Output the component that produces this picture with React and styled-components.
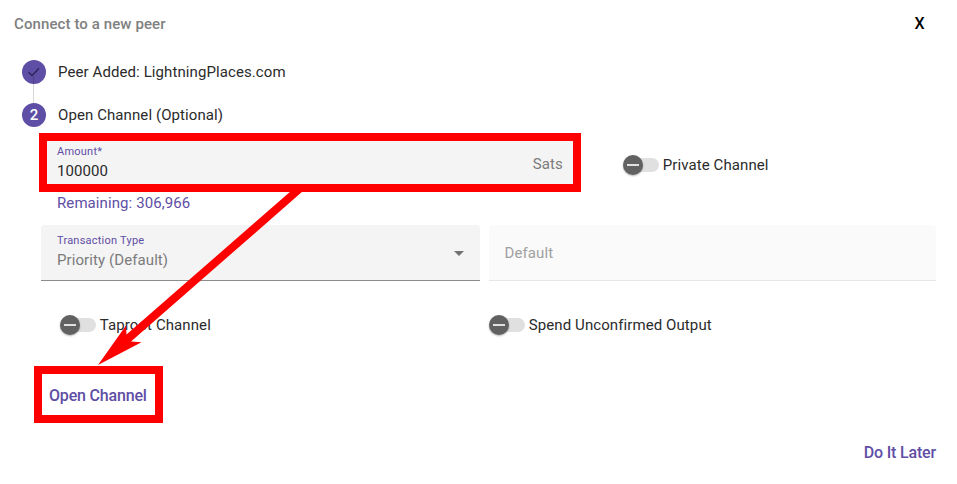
import React from "react";
import styled, { createGlobalStyle } from "styled-components";

const PURPLE = "#5e4ea5";

const GlobalStyle = createGlobalStyle`
  *, *::before, *::after { box-sizing: border-box; }
  body { margin: 0; background: #fff; }
`;

const Dialog = styled.main`
  position: relative;
  width: 957px;
  height: 484px;
  overflow: hidden;
  background: #fff;
  color: #2b2b2b;
  font: 400 15px/20px Roboto, sans-serif;
  letter-spacing: 0.09px;
  white-space: nowrap;
`;

const Header = styled.header`
  display: flex;
  justify-content: space-between;
  align-items: center;
  height: 48px;
  margin-bottom: 12px;
  padding: 0 32.5px 0 14px;
`;

const Title = styled.h1`
  margin: 0;
  font-size: 15px;
  font-weight: 500;
  color: #808080;
  letter-spacing: 0.1px;
`;

const CloseButton = styled.button`
  border: 0;
  padding: 0;
  background: none;
  color: #000;
  font: 500 16px/20px Roboto, sans-serif;
`;

const Step = styled.div`
  display: flex;
  align-items: center;
  gap: 12px;
  height: 24px;
  margin-left: 22px;
`;

const StepBadge = styled.span`
  display: flex;
  align-items: center;
  justify-content: center;
  width: 24px;
  height: 24px;
  border-radius: 50%;
  background: ${PURPLE};
  color: #fff;
  font-weight: 500;
`;

const Connector = styled.div`
  position: relative;
  width: 1px;
  height: 27px;
  margin: -8px 0 0 33px;
  background: rgba(0, 0, 0, 0.16);
`;

const Form = styled.form`
  padding: 9px 21px 0 41px;
`;

const AmountRow = styled.div`
  display: flex;
  height: 57px;
  gap: 45px;
`;

const Field = styled.div`
  display: flex;
  align-items: center;
  justify-content: space-between;
  width: ${(p) => p.$width}px;
  height: 56px;
  padding: 0 16px;
  border-radius: 4px 4px 0 0;
  border-bottom: 1px solid ${(p) => (p.$disabled ? "#e6e6e6" : "#8c8c8c")};
  background: ${(p) => (p.$disabled ? "#fafafa" : "#f4f4f4")};
`;

const FieldText = styled.div`
  display: flex;
  flex-direction: column;
  margin-top: ${(p) => p.$shift}px;
`;

const FieldLabel = styled.label`
  color: ${PURPLE};
  font-size: 11px;
  line-height: 19px;
  letter-spacing: 0.23px;
`;

const FieldValue = styled.span`
  color: ${(p) => p.$color};
`;

const Suffix = styled(FieldValue)`
  margin: 1px -0.8px 0 0;
`;

const Placeholder = styled(FieldValue)`
  margin-left: -0.5px;
`;

const Caret = styled.svg`
  margin-top: 2px;
`;

const Hint = styled.div`
  height: 32px;
  padding: 0 16px;
  color: ${PURPLE};
`;

const SelectRow = styled.div`
  display: flex;
  gap: 9px;
`;

const ToggleRow = styled.div`
  display: grid;
  grid-template-columns: 429px 1fr;
  margin-top: 34px;
  padding-left: 19px;
`;

const Toggle = styled.div`
  display: flex;
  align-items: center;
  height: 20px;
  margin-top: ${(p) => p.$top || 0}px;
`;

const Track = styled.span`
  display: flex;
  align-items: center;
  width: 26px;
  height: 14px;
  margin: 0 3.8px 0 10px;
  border-radius: 7px;
  background: #e0e0e0;
`;

const Thumb = styled.span`
  display: flex;
  flex: none;
  align-items: center;
  justify-content: center;
  width: 20px;
  height: 20px;
  margin-left: -10px;
  border-radius: 50%;
  background: #616161;
  box-shadow: 0 1px 2px rgba(0, 0, 0, 0.3);

  &::after {
    content: "";
    width: 12px;
    height: 2px;
    background: #e0e0e0;
  }
`;

const TextButton = styled.button`
  border: 0;
  padding: 0;
  background: none;
  color: ${PURPLE};
  font: 500 16px/20px Roboto, sans-serif;
  letter-spacing: -0.18px;
`;

const Actions = styled.div`
  display: flex;
  padding: 51px 0 0 8px;
`;

const Footer = styled.footer`
  display: flex;
  justify-content: flex-end;
  padding: 37px 21px 0 0;
`;

const Annotation = styled.svg`
  position: absolute;
  inset: 0;
  pointer-events: none;
`;

function SlideToggle({ label, ...rest }) {
  return (
    <Toggle role="switch" aria-checked="false" {...rest}>
      <Track><Thumb /></Track>
      <span>{label}</span>
    </Toggle>
  );
}

export default function App() {
  return (
    <>
      <GlobalStyle />
      <Dialog>
        <Header>
          <Title>Connect to a new peer</Title>
          <CloseButton>X</CloseButton>
        </Header>
        <Step>
          <StepBadge>
            <svg width="14" height="12" viewBox="0 0 14 12" fill="none" stroke="#2a2352" strokeWidth="1.3">
              <path d="M1.5 6.3 5 9.6 12 2.2" />
            </svg>
          </StepBadge>
          <span>Peer Added: LightningPlaces.com</span>
        </Step>
        <Connector />
        <Step>
          <StepBadge>2</StepBadge>
          <span>Open Channel (Optional)</span>
        </Step>
        <Form>
          <AmountRow>
            <Field $width={537}>
              <FieldText $shift={-5}>
                <FieldLabel>Amount*</FieldLabel>
                <FieldValue $color="#2b2b2b">100000</FieldValue>
              </FieldText>
              <Suffix $color="#7b7b7b">Sats</Suffix>
            </Field>
            <SlideToggle label="Private Channel" $top={19} />
          </AmountRow>
          <Hint>Remaining: 306,966</Hint>
          <SelectRow>
            <Field $width={439}>
              <FieldText $shift={-4}>
                <FieldLabel>Transaction Type</FieldLabel>
                <FieldValue $color="#7b7b7b">Priority (Default)</FieldValue>
              </FieldText>
              <Caret width="10" height="5" viewBox="0 0 10 5">
                <path d="M0 0h10L5 5z" fill="#717171" />
              </Caret>
            </Field>
            <Field $width={447} $disabled>
              <Placeholder $color="#a0a0a0">Default</Placeholder>
            </Field>
          </SelectRow>
          <ToggleRow>
            <SlideToggle label="Taproot Channel" />
            <SlideToggle label="Spend Unconfirmed Output" />
          </ToggleRow>
          <Actions>
            <TextButton type="button">Open Channel</TextButton>
          </Actions>
        </Form>
        <Footer>
          <TextButton type="button">Do It Later</TextButton>
        </Footer>
        <Annotation width="957" height="484" viewBox="0 0 957 484">
          <rect x="43" y="137" width="534" height="51" fill="none" stroke="#f00" strokeWidth="8" />
          <rect x="38" y="370" width="121" height="49" fill="none" stroke="#f00" strokeWidth="8" />
          <path d="M98 365 126 325.5 126.5 334.5 291 191 303 191 131 341.5 141.5 342.3z" fill="#f00" />
        </Annotation>
      </Dialog>
    </>
  );
}
